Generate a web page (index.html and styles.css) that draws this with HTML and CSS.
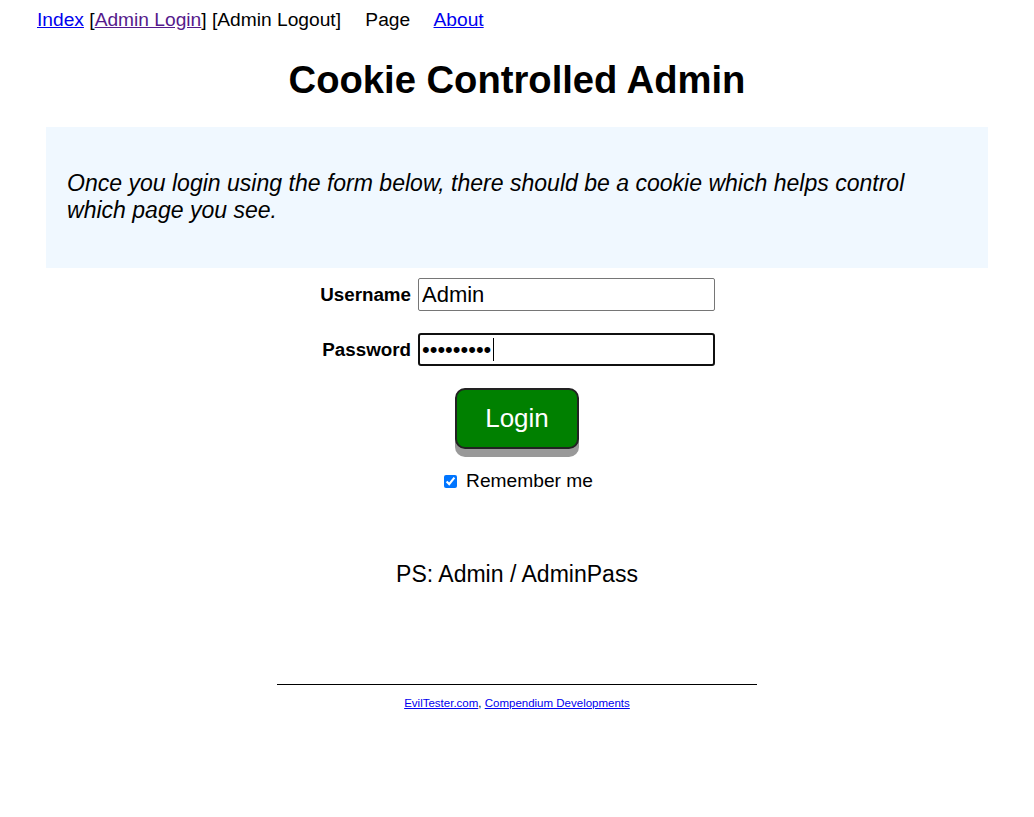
FILE: index.html
```html
<!DOCTYPE html>
<html>
<head>
<meta charset="utf-8">
<title>Cookie Controlled Admin</title>
<link rel="stylesheet" href="styles.css">
</head>
<body>
<div class="page">
  <nav class="menu"><a href="#" class="link">Index</a> [<a href="#" class="link visited">Admin Login</a>] [Admin Logout] <span class="gap-page">Page</span> <a href="#" class="link gap-about">About</a></nav>
  <h1 class="title">Cookie Controlled Admin</h1>
  <div class="explanation">
    <p>Once you login using the form below, there should be a cookie which helps control which page you see.</p>
  </div>
  <form class="login">
    <div class="row">
      <label class="lbl">Username</label>
      <input class="field" type="text" value="Admin">
    </div>
    <div class="row">
      <label class="lbl">Password</label>
      <div class="pwwrap">
        <input class="field focused" type="password" value="AdminPass">
        <span class="caret"></span>
      </div>
    </div>
    <div class="btnrow">
      <button type="button" class="btn">Login</button>
    </div>
    <div class="remember">
      <input type="checkbox" class="chk" checked>
      <span>Remember me</span>
    </div>
  </form>
  <p class="ps">PS: Admin / AdminPass</p>
  <footer class="footer">
    <div class="rule"></div>
    <p class="credits"><a href="#" class="link">EvilTester.com</a>, <a href="#" class="link">Compendium Developments</a></p>
  </footer>
</div>
</body>
</html>
```
FILE: styles.css
```css
html, body {
  margin: 0;
  padding: 0;
  background: #ffffff;
}
body {
  font-family: "Liberation Sans", Arial, sans-serif;
  font-size: 19.2px;
  color: #000;
}
.page {
  padding: 0 8px;
}
.link {
  color: #0000ee;
  text-decoration: underline;
}
.link.visited {
  color: #551a8b;
}
.menu {
  padding: 9px 0 0 29px;
  line-height: 22px;
}
.gap-page {
  margin-left: 19px;
}
.gap-about {
  margin-left: 18px;
}
.title {
  text-align: center;
  font-size: 38.2px;
  font-weight: bold;
  margin: 27px 0 0 0;
  line-height: 44px;
}
.explanation {
  background: #f0f8ff;
  margin: 25px 38px 0 38px;
  padding: 43px 21px 27px 21px;
  height: 71px;
}
.explanation p {
  margin: 0;
  font-style: italic;
  font-size: 23.04px;
  line-height: 27px;
}
.login {
  display: flex;
  flex-direction: column;
  align-items: center;
  margin-top: 10px;
}
.row {
  display: flex;
  align-items: center;
  gap: 7px;
  margin-bottom: 22px;
  margin-right: 5px;
}
.lbl {
  font-weight: bold;
  font-size: 18.8px;
  width: 97px;
  text-align: right;
}
.pwwrap {
  position: relative;
  display: flex;
}
.field {
  width: 297px;
  height: 33px;
  box-sizing: border-box;
  font-family: "Liberation Sans", Arial, sans-serif;
  font-size: 22px;
  padding: 0 3px;
  border: 1px solid #767676;
  border-radius: 2px;
  margin: 0;
  outline: none;
}
.field.focused {
  border: 2px solid #101010;
  border-radius: 3px;
  padding-left: 2px;
}
.caret {
  position: absolute;
  left: 75px;
  top: 5px;
  width: 1px;
  height: 23px;
  background: #000;
}
.btn {
  width: 124px;
  height: 61px;
  background: #008000;
  color: #fff;
  font-family: "Liberation Sans", Arial, sans-serif;
  font-size: 26px;
  border: 2px solid #222;
  border-radius: 10px;
  box-shadow: 0 8px 0 #999999;
  padding: 0;
  margin-left: 0;
}
.remember {
  display: flex;
  align-items: center;
  margin-top: 21px;
  margin-left: 3px;
  gap: 9px;
}
.chk {
  width: 13px;
  height: 13px;
  margin: 0;
  accent-color: #0075ff;
}
.ps {
  text-align: center;
  font-size: 23.04px;
  margin: 69px 0 0 0;
  line-height: 26px;
}
.footer {
  margin-top: 97px;
  display: flex;
  flex-direction: column;
  align-items: center;
}
.rule {
  width: 480px;
  border-top: 1px solid #000;
}
.credits {
  font-size: 11.5px;
  margin: 12px 0 0 0;
}
```
